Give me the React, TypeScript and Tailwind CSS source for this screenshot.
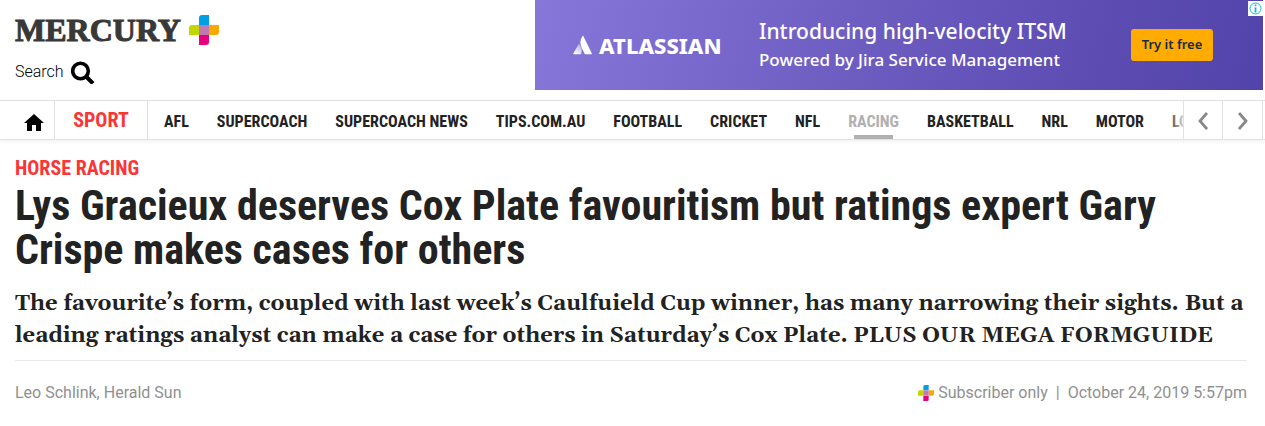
import React from "react";

const navItems = [
  "AFL",
  "SUPERCOACH",
  "SUPERCOACH NEWS",
  "TIPS.COM.AU",
  "FOOTBALL",
  "CRICKET",
  "NFL",
  "RACING",
  "BASKETBALL",
  "NRL",
  "MOTOR",
];

const activeItem = "RACING";

function PlusLogo({ className }: { className: string }) {
  return (
    <svg viewBox="0 0 30 30" className={className} aria-hidden="true">
      <path d="M10 10V3q0-3 3-3h7v10z" fill="#00a0e3" />
      <path d="M20 10h10v7q0 3-3 3h-7z" fill="#f9a800" />
      <path d="M10 20h10v7q0 3-3 3h-7z" fill="#e6007e" />
      <path d="M10 10v10H0v-7q0-3 3-3z" fill="#c4d600" />
      <path d="M10 10h10v10H10z" fill="#bd7ab3" />
    </svg>
  );
}

function AdBanner() {
  return (
    <aside className="relative mr-[2px] flex h-[90px] w-[728px] shrink-0 items-center bg-linear-105 from-[#8777d9] via-[#6554b9] via-60% to-[#5243aa] pl-[38px] font-['Noto_Sans',sans-serif] text-white">
      <a href="#" className="flex w-[186px] items-center gap-[6px]">
        <svg viewBox="0 0 20 20" className="size-[20px] shrink-0" aria-hidden="true">
          <defs>
            <linearGradient id="peak" x1="1" y1="0" x2="0.3" y2="1">
              <stop offset="0" stopColor="#fff" stopOpacity="0.35" />
              <stop offset="1" stopColor="#fff" />
            </linearGradient>
          </defs>
          <path d="M5.6 9.2q.4-.6.8 0Q9.9 13.5 8.2 18.7q-.1.5-.7.5H.8q-.8 0-.5-.8z" fill="url(#peak)" />
          <path d="M9.5 1q.4-.6.8 0l8.600 17.400q.3.8-.5.8h-6q-.5 0-.8-.5L8.400 12Q6 6.500 9.500 1z" fill="#fff" />
        </svg>
        <span className="text-[22px] leading-[24px] font-extrabold">ATLASSIAN</span>
      </a>
      <div className="flex w-[372px] flex-col font-medium whitespace-nowrap">
        <span className="text-[21px] leading-[30px]">Introducing high-velocity ITSM</span>
        <span className="text-[17px] leading-[28px]">Powered by Jira Service Management</span>
      </div>
      <button className="h-[32px] w-[82px] rounded-[3px] bg-[#ffab00] text-[13px] font-semibold text-[#172b4d]">
        Try it free
      </button>
      <button aria-label="Ad information" className="absolute top-[1px] right-0 size-[15px] bg-white">
        <svg viewBox="0 0 15 15" className="size-[15px]" fill="none" stroke="#18b5ce">
          <circle cx="7.5" cy="7.5" r="5.5" />
          <path d="M7.5 6.500v5M7.500 3.500v1.800" strokeWidth="1.8" />
        </svg>
      </button>
    </aside>
  );
}

function Header() {
  return (
    <header className="flex justify-between">
      <div className="flex flex-col pt-[15px] pl-[15px]">
        <a href="#" className="flex h-[30px] items-center gap-[8px] text-[#383838]">
          <span className="font-['Liberation_Serif',serif] text-[32px] leading-[30px] font-bold [-webkit-text-stroke:1px_#383838]">
            MERCURY
          </span>
          <PlusLogo className="size-[30px]" />
        </a>
        <button className="mt-[15px] flex items-center gap-[7px] text-[16px] leading-[24px] font-light text-black">
          Search
          <svg viewBox="0 0 24 24" className="size-[24px]" fill="none" stroke="#000" aria-hidden="true">
            <circle cx="9.5" cy="11" r="7.8" strokeWidth="3.6" />
            <path d="M15 16.5l7 7" strokeWidth="4" />
          </svg>
        </button>
      </div>
      <AdBanner />
    </header>
  );
}

function SectionNav() {
  return (
    <nav className="mt-[10px] flex h-[40px] border-y border-[#e1e1e1] font-['Roboto_Condensed','Liberation_Sans_Narrow',sans-serif] font-bold shadow-[0_2px_3px_rgba(0,0,0,0.05)]">
      <a
        href="#"
        aria-label="Home"
        className="flex w-[55px] shrink-0 items-center border-r border-[#e1e1e1] pt-[4px] pl-[24px]"
      >
        <svg viewBox="0 0 20 17" className="h-[17px] w-[20px]" aria-hidden="true">
          <path d="M10 0l10 9h-3v8h-5v-6H8v6H3V9H0z" fill="#000" />
        </svg>
      </a>
      <a
        href="#"
        className="flex w-[93px] shrink-0 items-center justify-center border-r border-[#e1e1e1] text-[20px] text-[#fa3535]"
      >
        SPORT
      </a>
      <div className="relative flex min-w-0 flex-1 overflow-hidden pl-[2px] text-[16px] text-[#222]">
        {navItems.map((item) =>
          item === activeItem ? (
            <a key={item} href="#" className="relative flex shrink-0 items-center px-[14px] pt-[4px] text-[#b0b0b0]">
              {item}
              <span className="absolute inset-x-[20px] bottom-0 h-[4px] bg-[#b0b0b0]" />
            </a>
          ) : (
            <a key={item} href="#" className="flex shrink-0 items-center px-[14px] pt-[4px]">
              {item}
            </a>
          )
        )}
        <a href="#" className="flex shrink-0 items-center px-[14px] pt-[4px]">
          LOCAL SPORT
        </a>
        <span className="absolute inset-y-0 right-0 w-[16px] bg-linear-to-r from-transparent to-white/80" />
      </div>
      <button
        aria-label="Previous"
        className="flex w-[39px] shrink-0 items-center justify-center border-l border-[#e1e1e1] pt-[2px]"
      >
        <svg viewBox="0 0 10 18" className="h-[18px] w-[10px]" fill="none" stroke="#888" strokeWidth="2.8">
          <path d="M9 1L2 9l7 8" />
        </svg>
      </button>
      <button
        aria-label="Next"
        className="mr-[2px] flex w-[41px] shrink-0 items-center justify-center border-x border-[#e1e1e1] pt-[2px]"
      >
        <svg viewBox="0 0 10 18" className="h-[18px] w-[10px]" fill="none" stroke="#888" strokeWidth="2.8">
          <path d="M1 1l7 8-7 8" />
        </svg>
      </button>
    </nav>
  );
}

export default function App() {
  return (
    <div className="bg-white font-['Roboto',sans-serif]">
      <Header />
      <SectionNav />
      <main className="pr-[18px] pl-[15px]">
        <a
          href="#"
          className="mt-[16px] block font-['Roboto_Condensed','Liberation_Sans_Narrow',sans-serif] text-[20px] leading-[24px] font-bold text-[#fa3535]"
        >
          HORSE RACING
        </a>
        <h1 className="mt-[4px] font-['Roboto_Condensed','Liberation_Sans_Narrow',sans-serif] text-[42px] leading-[44px] font-bold text-[#222]">
          Lys Gracieux deserves Cox Plate favouritism but ratings expert Gary Crispe makes cases for others
        </h1>
        <p className="mt-[16px] border-b border-[#e8e8e8] pb-[8px] font-['Gelasio','Liberation_Serif',serif] text-[22px] leading-[32px] font-bold text-[#222]">
          The favourite’s form, coupled with last week’s Caulfuield Cup winner, has many narrowing their sights. But a
          leading ratings analyst can make a case for others in Saturday’s Cox Plate. PLUS OUR MEGA FORMGUIDE
        </p>
        <div className="mt-[20px] flex items-center justify-between text-[16px] leading-[24px] text-[#909090]">
          <span>Leo Schlink, Herald Sun</span>
          <div className="flex items-center gap-[4px]">
            <PlusLogo className="size-[16px]" />
            <span>Subscriber only</span>
            <span className="px-[4px]">|</span>
            <span>October 24, 2019 5:57pm</span>
          </div>
        </div>
      </main>
    </div>
  );
}
